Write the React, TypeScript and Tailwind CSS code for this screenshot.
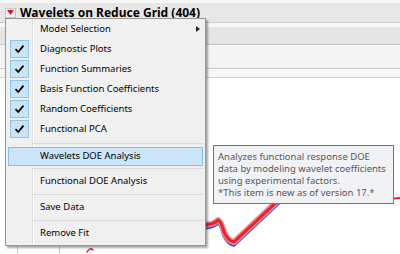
import React from "react";

const ui = { fontFamily: '"Noto Sans", "Liberation Sans", sans-serif' };

function Check() {
  return (
    <div className="w-[19px] h-[18px] ml-[4px] flex items-center justify-center bg-[#c9e4f6] border border-[#8ec3e7]">
      <svg width="11" height="10" viewBox="0 0 11 10">
        <path d="M1.5 5.2 L4.2 8 L9.5 1.6" fill="none" stroke="#000" strokeWidth="1.7" />
      </svg>
    </div>
  );
}

function Item({ label, checked, arrow }: { label: string; checked?: boolean; arrow?: boolean }) {
  return (
    <div className="h-[20px] flex items-center relative">
      <div className="w-[27px] h-full flex items-center">{checked && <Check />}</div>
      <span className="ml-[7px] text-[9.5px] text-black whitespace-nowrap">{label}</span>
      {arrow && (
        <svg className="absolute left-[190px] top-[7px]" width="5" height="6" viewBox="0 0 5 6">
          <path d="M0 0 L4 3 L0 6 Z" fill="#222" />
        </svg>
      )}
    </div>
  );
}

function Sep() {
  return <div className="ml-[27px] mr-[2px] h-px bg-[#d9d9d9]" />;
}

function Plain({ label }: { label: string }) {
  return (
    <div className="h-[25px] flex items-center">
      <span className="ml-[34px] text-[9.5px] text-black whitespace-nowrap">{label}</span>
    </div>
  );
}

export default function App() {
  return (
    <div className="w-[400px] h-[254px] relative overflow-hidden bg-white flex flex-col" style={ui}>
      {/* window chrome behind the menu */}
      <div className="h-[3px] bg-[#f7f7f7]" />
      <div className="h-[20px] bg-[#e7e7e7] border-b border-[#cdcdcd] flex items-center">
        <div className="ml-[5px] w-[11px] h-[10px] bg-[#f2f2f2] border border-[#c4c4c4] flex items-center justify-center">
          <svg width="7" height="5" viewBox="0 0 7 5">
            <path d="M0 0 L7 0 L3.5 5 Z" fill="#e3141c" />
          </svg>
        </div>
        <span className="ml-[4px] text-[12px] font-bold text-black leading-none">Wavelets on Reduce Grid (404)</span>
      </div>
      <div className="h-[4px] bg-[#f8f8f8]" />
      <div className="h-[18px] bg-[#e5e5e5] border-b border-[#c6c6c6]" />
      <div className="h-[24px] bg-[#f4f4f4] border-b border-[#cacaca]" />
      <div className="h-[9px] bg-[#f7f7f7] border-b border-[#d4d4d4]" />
      <div className="flex-1 relative">
        <div className="absolute left-[17px] top-[167px] w-[43px] h-[20px] border-x border-[#c8c8c8]" />
        <svg className="absolute left-0 top-0" width="400" height="176" viewBox="0 78 400 176">
          <g fill="none" strokeLinecap="round" strokeLinejoin="round">
            <path d="M200 228.5 L208 227.5 Q214 226.5 218 223 Q221 224 224 235.5 Q228 244 234 245 L300 183" stroke="#3a4bef" strokeWidth="3.5" />
            <path d="M200 226 L208 224.5 Q214 224 218 220 Q221 221 224 232 Q228 241 234 242 L300 180" stroke="#f0868b" strokeWidth="6" />
            <path d="M200 226 L208 224.5 Q214 224 218 220 Q221 221 224 232 Q228 241 234 242 L300 180" stroke="#e8222c" strokeWidth="3" />
            <path d="M382 199.5 L400 198" stroke="#e8222c" strokeWidth="2" />
            <path d="M87 252 Q90 247 93 250" stroke="#e8222c" strokeWidth="1.5" />
          </g>
        </svg>
      </div>

      {/* popup menu */}
      <div className="absolute left-[5px] top-[18px] w-[201px] h-[228px] bg-[#f0f0f0] border border-[#979797] shadow-[2px_2px_2px_rgba(0,0,0,0.35)] flex flex-col">
        <div className="absolute left-[26px] top-0 bottom-0 w-px bg-[#dedede]" />
        <div className="absolute left-[27px] top-0 bottom-0 w-px bg-white" />
        <div className="relative flex flex-col">
          <Item label="Model Selection" arrow />
          <Item label="Diagnostic Plots" checked />
          <Item label="Function Summaries" checked />
          <Item label="Basis Function Coefficients" checked />
          <Item label="Random Coefficients" checked />
          <Item label="Functional PCA" checked />
          <div className="h-[4px]" />
          <Sep />
          <div className="h-[3px]" />
          <div className="mx-[2px] h-[19px] bg-[#cce4f7] border border-[#86bde6] flex items-center">
            <span className="ml-[31px] text-[9.5px] text-black whitespace-nowrap">Wavelets DOE Analysis</span>
          </div>
          <div className="h-[2px]" />
          <Sep />
          <Plain label="Functional DOE Analysis" />
          <Sep />
          <Plain label="Save Data" />
          <Sep />
          <Plain label="Remove Fit" />
        </div>
      </div>

      {/* tooltip */}
      <div className="absolute left-[213px] top-[145px] w-[181px] h-[59px] bg-[#f1f2f6] border border-[#767676] px-[4px] pt-[5px] text-[9.5px] leading-[12px] text-[#575757] whitespace-nowrap">
        <div>Analyzes functional response DOE</div>
        <div>data by modeling wavelet coefficients</div>
        <div>using experimental factors.</div>
        <div>*This item is new as of version 17.*</div>
      </div>
    </div>
  );
}
